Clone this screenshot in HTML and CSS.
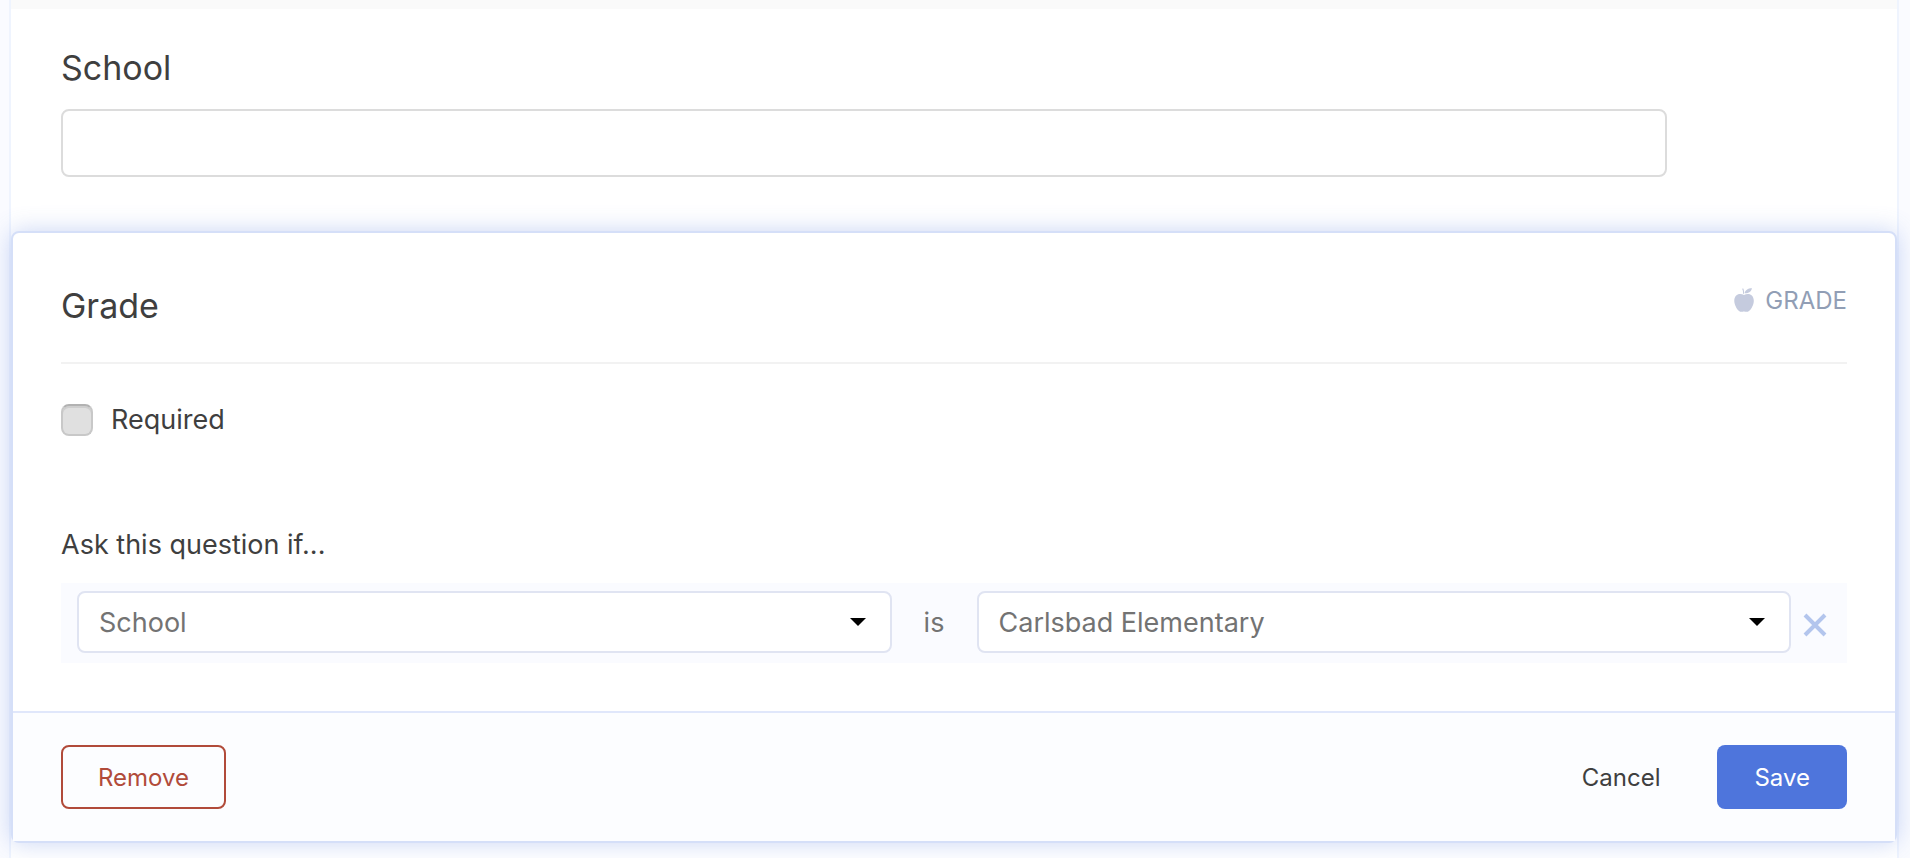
FILE: index.html
```
<!DOCTYPE html>
<html lang="en">
<head>
<meta charset="utf-8">
<title>Form editor</title>
<link rel="stylesheet" href="styles.css">
</head>
<body>
<main class="form">
  <section class="question">
    <label class="title" for="school">School</label>
    <input class="text-input" id="school" type="text">
  </section>
  <form class="card">
    <div class="card-body">
      <header class="card-head">
        <h2 class="title">Grade</h2>
        <span class="kind">
          <svg class="apple" viewBox="0 0 20 24" aria-hidden="true"><path d="M10 7C7.500 5.700 4.500 5.600 2.500 7.300C.3 9.200-.2 12.500.7 15.700C1.800 19.500 4.300 23.800 7.200 23.800C8.400 23.800 9 23.500 10 23.500C11 23.500 11.700 23.800 12.900 23.800C15.800 23.800 18.300 19.500 19.400 15.700C20.300 12.500 19.700 9.200 17.500 7.300C15.500 5.600 12.500 5.700 10 7Z"/><path d="M10.500 5.300C11 2.300 13.800.2 18 .2C17.500 3.300 14.500 5.500 10.500 5.300Z"/><path d="M8 .8L9.300.5C10 2 10.200 3.700 10 5.700H9C9.200 3.800 8.900 2.200 8 .8Z"/></svg>
          GRADE
        </span>
      </header>
      <label class="required"><input class="check" type="checkbox">Required</label>
      <fieldset class="condition">
        <legend class="legend">Ask this question if...</legend>
        <div class="rule">
          <select class="select" aria-label="Question"><option>School</option></select>
          <span class="operator">is</span>
          <select class="select" aria-label="Answer"><option>Carlsbad Elementary</option></select>
          <button class="clear" type="button" aria-label="Remove condition">
            <svg class="cross" viewBox="0 0 24 24" aria-hidden="true"><path d="M2 2L22 22M22 2L2 22"/></svg>
          </button>
        </div>
      </fieldset>
    </div>
    <footer class="card-foot">
      <button class="button remove" type="button">Remove</button>
      <span class="actions">
        <button class="button cancel" type="button">Cancel</button>
        <button class="button save" type="submit">Save</button>
      </span>
    </footer>
  </form>
</main>
</body>
</html>
```
FILE: styles.css
```
* { box-sizing: border-box; }

body {
  margin: 0;
  background: #fafbff;
  color: #3f3f3f;
  font-family: Inter, "Liberation Sans", sans-serif;
  font-size: 27px;
}

button, input, select { font-family: inherit; color: inherit; }

.form {
  min-height: 100vh;
  margin: 0 11px 0 9px;
  border: 2px solid #eff4fe;
  border-width: 0 2px;
  background: #fff;
}

.question {
  padding: 37px 52px 54px 50px;
  border-top: 9px solid #fafafa;
}

.title {
  display: block;
  margin: 0;
  font-size: 34px;
  font-weight: 400;
  line-height: 44px;
}

.text-input {
  display: block;
  width: 90%;
  height: 68px;
  margin-top: 19px;
  padding: 0 20px;
  border: 2px solid #dcdcdc;
  border-radius: 8px;
  background: #fff;
  font-size: 27px;
}

.card {
  border: 2px solid #d5dff8;
  border-radius: 8px;
  background: #fff;
  box-shadow: 0 0 24px #4c74dc4d;
}

.card-body { padding: 51px 48px 48px; }

.card-head {
  display: flex;
  justify-content: space-between;
  padding-bottom: 34px;
  border-bottom: 2px solid #f2f2f2;
}

.kind {
  display: flex;
  gap: 11px;
  align-items: center;
  height: 32px;
  color: #919eb5;
  font-size: 24px;
}

.apple { width: 20px; height: 24px; fill: #c5cbde; }

.required {
  display: flex;
  gap: 18px;
  align-items: center;
  width: fit-content;
  margin-top: 40px;
  line-height: 32px;
}

.check {
  appearance: none;
  width: 32px;
  height: 32px;
  margin: 0;
  border: 2px solid #c8c8c8;
  border-top-color: #b2b2b2;
  border-radius: 8px;
  background: #e0e0e0;
  box-shadow: inset 0 2px #cecece;
}

.condition { margin: 90px 0 0; padding: 0; border: 0; }

.legend { padding: 0 0 19px; line-height: 38px; }

.rule {
  display: flex;
  align-items: center;
  padding: 8px 8px 10px 16px;
  background: #fafbff;
  color: #737373;
}

.select {
  appearance: none;
  flex: 1;
  min-width: 0;
  height: 62px;
  padding: 0 56px 0 20px;
  border: 2px solid #e0e4f2;
  border-radius: 8px;
  background: #fff url("data:image/svg+xml,%3Csvg xmlns='http://www.w3.org/2000/svg' width='16' height='8'%3E%3Cpath d='M0 0H16L8 8Z'/%3E%3C/svg%3E") no-repeat right 24px center;
  font-size: 27px;
}

.operator { width: 85px; text-align: center; }

.clear {
  display: flex;
  align-items: center;
  justify-content: center;
  width: 48px;
  height: 62px;
  padding: 6px 0 0;
  border: 0;
  background: none;
}

.cross { width: 24px; height: 24px; fill: none; stroke: #b3c5ed; stroke-width: 4; }

.card-foot {
  display: flex;
  align-items: center;
  justify-content: space-between;
  padding: 32px 48px;
  border-top: 2px solid #e0e7fb;
  background: #fcfdff;
}

.actions { display: flex; gap: 20px; }

.button {
  height: 64px;
  padding: 0 35px;
  border: 2px solid transparent;
  border-radius: 8px;
  background: none;
  font-size: 24px;
}

.remove { border-color: #b14b3a; color: #b14b3a; }

.save { background: #4e75dc; color: #fff; }
```
